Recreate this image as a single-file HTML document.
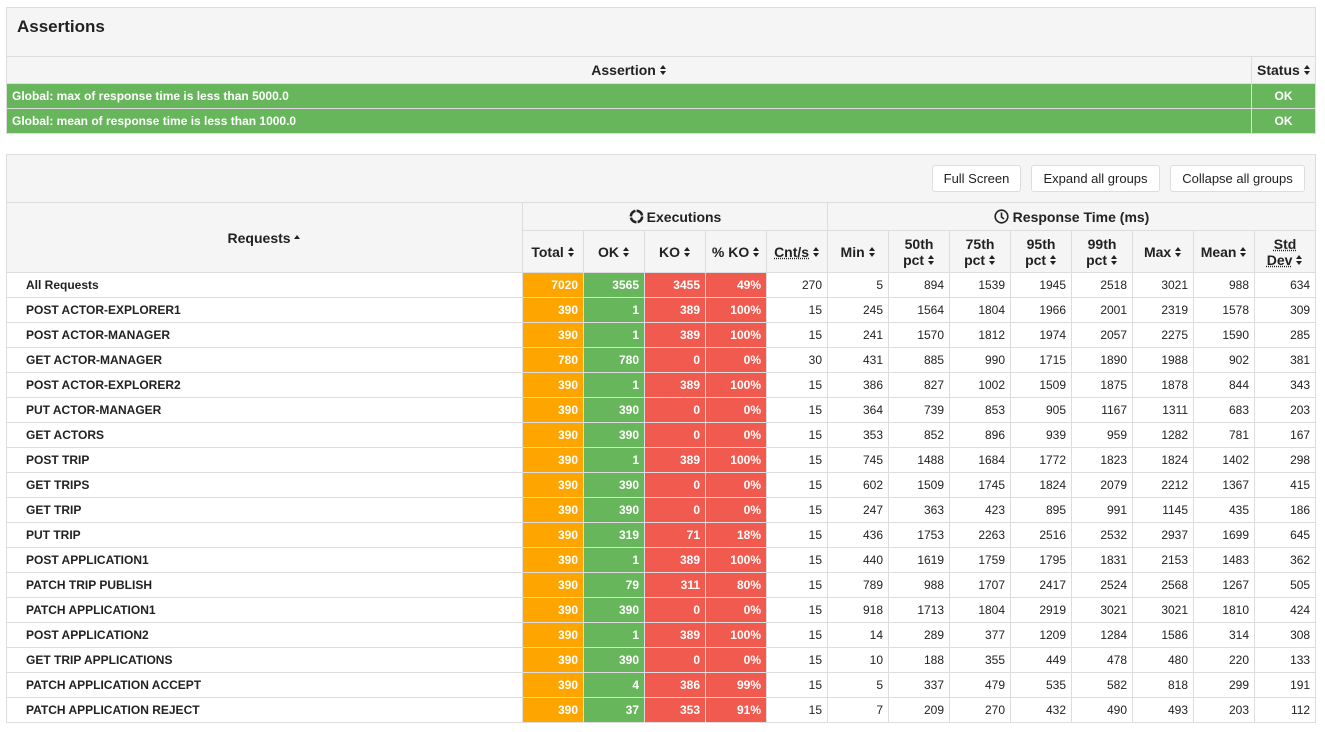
<!DOCTYPE html>
<html><head><meta charset="utf-8"><style>
*{box-sizing:border-box;margin:0;padding:0}
body{width:1325px;height:732px;background:#fff;font-family:"Liberation Sans",sans-serif;color:#222;position:relative;overflow:hidden}
.panel{position:absolute;left:6px;width:1310px;border:1px solid #ddd;background:#f5f5f5}
table{border-collapse:collapse;table-layout:fixed;position:absolute;left:6px}
td,th{border:1px solid #ddd;font-size:12px;font-weight:normal;padding:0 5px;white-space:nowrap;overflow:hidden}
th{background:#f5f5f5;font-size:14px;font-weight:bold;color:#222}
.s{display:inline-block;width:7px;height:11px;position:relative;vertical-align:-1px}
.s:before{content:"";position:absolute;left:0;top:0;border:3.5px solid transparent;border-bottom:4px solid #222;border-top:0}
.s:after{content:"";position:absolute;left:0;top:6px;border:3.5px solid transparent;border-top:4px solid #222;border-bottom:0}
.up{display:inline-block;width:7px;height:11px;position:relative;vertical-align:-1px}
.up:before{content:"";position:absolute;left:0;top:2px;border:3.5px solid transparent;border-bottom:4px solid #222;border-top:0}
td{height:25px;text-align:right;background:#fff}
td.n{text-align:left;padding-left:19px;font-weight:bold}
.o{background:#ffa500;color:#fff;font-weight:bold}.g{background:#68b65c;color:#fff;font-weight:bold}.r{background:#f15a4f;color:#fff;font-weight:bold}
.btn{position:absolute;top:165px;height:27px;border:1px solid #ddd;background:#fff;border-radius:3px;font-size:13px;line-height:25px;text-align:center;color:#222}
.u{text-decoration:underline dotted}
</style></head><body>
<div class="panel" style="top:7px;height:127px"></div>
<div style="position:absolute;left:17px;top:17px;font-size:17px;font-weight:bold">Assertions</div>
<table style="top:56px;width:1309px">
<col style="width:1245px"><col style="width:64px">
<tr><th style="height:27px">Assertion <span class="s"></span></th><th>Status <span class="s"></span></th></tr>
<tr><td class="g" style="text-align:left;padding-left:5px">Global: max of response time is less than 5000.0</td><td class="g" style="text-align:center">OK</td></tr>
<tr><td class="g" style="text-align:left;padding-left:5px">Global: mean of response time is less than 1000.0</td><td class="g" style="text-align:center">OK</td></tr>
</table>
<div class="panel" style="top:154px;height:569px"></div>
<div class="btn" style="left:932px;width:89px">Full Screen</div>
<div class="btn" style="left:1031px;width:129px">Expand all groups</div>
<div class="btn" style="left:1170px;width:135px">Collapse all groups</div>
<table style="top:202px;width:1309px">
<col style="width:516px"><col style="width:61px"><col style="width:61px"><col style="width:61px"><col style="width:61px"><col style="width:61px"><col style="width:61px"><col style="width:61px"><col style="width:61px"><col style="width:61px"><col style="width:61px"><col style="width:61px"><col style="width:61px"><col style="width:61px">
<tr style="height:28px"><th rowspan="2">Requests <span class="up"></span></th><th colspan="5"><svg width="15" height="15" viewBox="0 0 14 14" style="vertical-align:-2px;margin-right:3px"><circle cx="7" cy="7" r="5.3" fill="none" stroke="#222" stroke-width="2.4" stroke-dasharray="7.2 1.1"/></svg>Executions</th><th colspan="8"><svg width="15" height="15" viewBox="0 0 15 15" style="vertical-align:-2px"><circle cx="7.5" cy="7.5" r="6.3" fill="none" stroke="#222" stroke-width="1.6"/><path d="M7.5 3.5V8l2.5 2" fill="none" stroke="#222" stroke-width="1.6"/></svg> Response Time (ms)</th></tr>
<tr style="height:42px"><th>Total <span class="s"></span></th><th>OK <span class="s"></span></th><th>KO <span class="s"></span></th><th>% KO <span class="s"></span></th><th><span class="u">Cnt/s</span> <span class="s"></span></th><th>Min <span class="s"></span></th><th>50th<br>pct <span class="s"></span></th><th>75th<br>pct <span class="s"></span></th><th>95th<br>pct <span class="s"></span></th><th>99th<br>pct <span class="s"></span></th><th>Max <span class="s"></span></th><th>Mean <span class="s"></span></th><th><span class="u">Std<br>Dev</span> <span class="s"></span></th></tr>
<tr><td class="n">All Requests</td><td class="o">7020</td><td class="g">3565</td><td class="r">3455</td><td class="r">49%</td><td>270</td><td>5</td><td>894</td><td>1539</td><td>1945</td><td>2518</td><td>3021</td><td>988</td><td>634</td></tr>
<tr><td class="n">POST ACTOR-EXPLORER1</td><td class="o">390</td><td class="g">1</td><td class="r">389</td><td class="r">100%</td><td>15</td><td>245</td><td>1564</td><td>1804</td><td>1966</td><td>2001</td><td>2319</td><td>1578</td><td>309</td></tr>
<tr><td class="n">POST ACTOR-MANAGER</td><td class="o">390</td><td class="g">1</td><td class="r">389</td><td class="r">100%</td><td>15</td><td>241</td><td>1570</td><td>1812</td><td>1974</td><td>2057</td><td>2275</td><td>1590</td><td>285</td></tr>
<tr><td class="n">GET ACTOR-MANAGER</td><td class="o">780</td><td class="g">780</td><td class="r">0</td><td class="r">0%</td><td>30</td><td>431</td><td>885</td><td>990</td><td>1715</td><td>1890</td><td>1988</td><td>902</td><td>381</td></tr>
<tr><td class="n">POST ACTOR-EXPLORER2</td><td class="o">390</td><td class="g">1</td><td class="r">389</td><td class="r">100%</td><td>15</td><td>386</td><td>827</td><td>1002</td><td>1509</td><td>1875</td><td>1878</td><td>844</td><td>343</td></tr>
<tr><td class="n">PUT ACTOR-MANAGER</td><td class="o">390</td><td class="g">390</td><td class="r">0</td><td class="r">0%</td><td>15</td><td>364</td><td>739</td><td>853</td><td>905</td><td>1167</td><td>1311</td><td>683</td><td>203</td></tr>
<tr><td class="n">GET ACTORS</td><td class="o">390</td><td class="g">390</td><td class="r">0</td><td class="r">0%</td><td>15</td><td>353</td><td>852</td><td>896</td><td>939</td><td>959</td><td>1282</td><td>781</td><td>167</td></tr>
<tr><td class="n">POST TRIP</td><td class="o">390</td><td class="g">1</td><td class="r">389</td><td class="r">100%</td><td>15</td><td>745</td><td>1488</td><td>1684</td><td>1772</td><td>1823</td><td>1824</td><td>1402</td><td>298</td></tr>
<tr><td class="n">GET TRIPS</td><td class="o">390</td><td class="g">390</td><td class="r">0</td><td class="r">0%</td><td>15</td><td>602</td><td>1509</td><td>1745</td><td>1824</td><td>2079</td><td>2212</td><td>1367</td><td>415</td></tr>
<tr><td class="n">GET TRIP</td><td class="o">390</td><td class="g">390</td><td class="r">0</td><td class="r">0%</td><td>15</td><td>247</td><td>363</td><td>423</td><td>895</td><td>991</td><td>1145</td><td>435</td><td>186</td></tr>
<tr><td class="n">PUT TRIP</td><td class="o">390</td><td class="g">319</td><td class="r">71</td><td class="r">18%</td><td>15</td><td>436</td><td>1753</td><td>2263</td><td>2516</td><td>2532</td><td>2937</td><td>1699</td><td>645</td></tr>
<tr><td class="n">POST APPLICATION1</td><td class="o">390</td><td class="g">1</td><td class="r">389</td><td class="r">100%</td><td>15</td><td>440</td><td>1619</td><td>1759</td><td>1795</td><td>1831</td><td>2153</td><td>1483</td><td>362</td></tr>
<tr><td class="n">PATCH TRIP PUBLISH</td><td class="o">390</td><td class="g">79</td><td class="r">311</td><td class="r">80%</td><td>15</td><td>789</td><td>988</td><td>1707</td><td>2417</td><td>2524</td><td>2568</td><td>1267</td><td>505</td></tr>
<tr><td class="n">PATCH APPLICATION1</td><td class="o">390</td><td class="g">390</td><td class="r">0</td><td class="r">0%</td><td>15</td><td>918</td><td>1713</td><td>1804</td><td>2919</td><td>3021</td><td>3021</td><td>1810</td><td>424</td></tr>
<tr><td class="n">POST APPLICATION2</td><td class="o">390</td><td class="g">1</td><td class="r">389</td><td class="r">100%</td><td>15</td><td>14</td><td>289</td><td>377</td><td>1209</td><td>1284</td><td>1586</td><td>314</td><td>308</td></tr>
<tr><td class="n">GET TRIP APPLICATIONS</td><td class="o">390</td><td class="g">390</td><td class="r">0</td><td class="r">0%</td><td>15</td><td>10</td><td>188</td><td>355</td><td>449</td><td>478</td><td>480</td><td>220</td><td>133</td></tr>
<tr><td class="n">PATCH APPLICATION ACCEPT</td><td class="o">390</td><td class="g">4</td><td class="r">386</td><td class="r">99%</td><td>15</td><td>5</td><td>337</td><td>479</td><td>535</td><td>582</td><td>818</td><td>299</td><td>191</td></tr>
<tr><td class="n">PATCH APPLICATION REJECT</td><td class="o">390</td><td class="g">37</td><td class="r">353</td><td class="r">91%</td><td>15</td><td>7</td><td>209</td><td>270</td><td>432</td><td>490</td><td>493</td><td>203</td><td>112</td></tr>
</table>
</body></html>
